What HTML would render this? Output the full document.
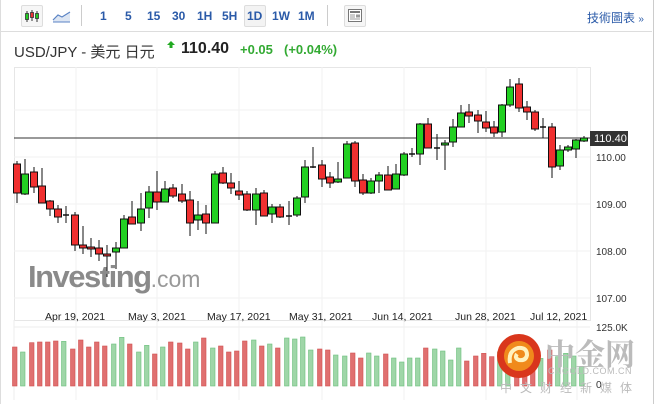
<!DOCTYPE html>
<html><head><meta charset="utf-8"><style>
body{margin:0;width:654px;height:405px;overflow:hidden;background:#fff;font-family:"Liberation Sans","Noto Sans CJK TC",sans-serif;position:relative}
.a{position:absolute}
.tb{font-size:12px;font-weight:bold;color:#2a5aa8;top:9px}
</style></head><body>
<div class="a" style="left:0;top:0;width:652px;height:404px;border-right:1px solid #ccc;border-left:1px solid #ddd"></div>
<div class="a" style="left:0;top:31px;width:652px;height:1px;background:#ddd"></div>
<div class="a" style="left:21px;top:5px;width:20px;height:20px;border:1px solid #ddd;border-radius:2px;background:#f6f6f6"></div>
<svg class="a" style="left:21px;top:5px" width="22" height="22">
<line x1="6" y1="6" x2="6" y2="17" stroke="#333"/><rect x="4.5" y="8.5" width="3" height="6" fill="#2c2" stroke="#333" stroke-width="0.8"/>
<line x1="11" y1="5" x2="11" y2="16" stroke="#333"/><rect x="9.5" y="7.5" width="3" height="5" fill="#e33" stroke="#333" stroke-width="0.8"/>
<line x1="16" y1="6" x2="16" y2="17" stroke="#333"/><rect x="14.5" y="8.5" width="3" height="5" fill="#2c2" stroke="#333" stroke-width="0.8"/></svg>
<svg class="a" style="left:52px;top:9px" width="20" height="14"><path d="M1 11 L6 6 L10 8 L18 3 L18 13 L1 13Z" fill="#dde6f3"/><path d="M1 11 L6 6 L10 8 L18 3" stroke="#5a83c4" fill="none" stroke-width="1.2"/><line x1="1" y1="13" x2="18" y2="13" stroke="#5a83c4"/></svg>
<div class="a" style="left:81px;top:5px;width:1px;height:21px;background:#ccc"></div>
<div class="a tb" style="left:100px">1</div><div class="a tb" style="left:125px">5</div><div class="a tb" style="left:147px">15</div><div class="a tb" style="left:172px">30</div><div class="a tb" style="left:197px">1H</div><div class="a tb" style="left:222px">5H</div>
<div class="a" style="left:244px;top:5px;width:20px;height:20px;border:1px solid #ddd;border-radius:2px;background:#f3f3f3"></div>
<div class="a tb" style="left:247px">1D</div><div class="a tb" style="left:272px">1W</div><div class="a tb" style="left:298px">1M</div>
<div class="a" style="left:327px;top:5px;width:1px;height:21px;background:#ccc"></div>
<div class="a" style="left:344px;top:5px;width:20px;height:20px;border:1px solid #ddd;border-radius:2px;background:#f6f6f6"></div>
<svg class="a" style="left:348px;top:9px" width="14" height="13"><rect x="0.5" y="0.5" width="13" height="12" fill="#fff" stroke="#777"/><rect x="2" y="2" width="10" height="2" fill="#777"/><line x1="2" y1="6" x2="7" y2="6" stroke="#999"/><line x1="2" y1="8" x2="7" y2="8" stroke="#999"/><line x1="2" y1="10" x2="12" y2="10" stroke="#999"/><rect x="8" y="5.5" width="4" height="3" fill="#999"/></svg>
<div class="a" style="left:587px;top:9px;font-size:12px;color:#2a5aa8">技術圖表 <span style="font-size:10px">»</span></div>
<div class="a" style="left:14px;top:41px;font-size:15px;color:#333">USD/JPY - 美元 日元</div>
<svg class="a" style="left:167px;top:41px" width="8" height="8"><path d="M4 0 L8 4 L5.5 4 L5.5 7 L2.5 7 L2.5 4 L0 4Z" fill="#2a2"/></svg>
<div class="a" style="left:181px;top:40px;font-size:16px;font-weight:bold;color:#222">110.40</div>
<div class="a" style="left:240px;top:42px;font-size:13px;font-weight:bold;color:#3a3">+0.05</div>
<div class="a" style="left:284px;top:42px;font-size:13px;font-weight:bold;color:#3a3">(+0.04%)</div>
<svg id="c" class="a" style="left:0;top:0" width="654" height="405"></svg>
<div class="a" style="left:28px;top:259px;font-size:31px;font-weight:bold;color:#8a8a8a;letter-spacing:-1.5px">Investing<span style="font-weight:normal;font-size:23px;color:#999;letter-spacing:0">.com</span></div>
<svg class="a" style="left:496px;top:333px" width="46" height="46"><circle cx="23" cy="23" r="22" fill="#d9361c"/><circle cx="23" cy="23" r="15" fill="#f08a1c"/><path d="M14 30 Q12 18 22 15 Q31 14 31 22 Q30 28 23 27 Q18 25 21 21" stroke="#fff2c0" stroke-width="4" fill="none"/></svg>
<div class="a" style="left:545px;top:330px;font-size:30px;font-weight:bold;color:#bbb;font-family:'Noto Serif CJK SC',serif">中金网</div>
<div class="a" style="left:548px;top:366px;font-size:9px;color:#bbb;letter-spacing:0.5px">CNGOLD.COM.CN</div>
<div class="a" style="left:500px;top:379px;font-size:12px;color:#bbb;letter-spacing:8px">中文财经新媒体</div>
<script>
var C=[[17,164,193,161,203,0],[25,174,194,159,195,1],[34,172,187,167,193,0],[42,186,203,168,203,0],[50,201,209,200,216,0],[58,209,217,205,223,0],[66,215,215,206,223,2],[75,215,245,212,251,0],[83,245,248,226,254,0],[91,247,249,238,257,0],[99,248,254,240,261,0],[107,254,256,245,277,0],[116,248,252,242,269,1],[124,219,248,215,248,1],[132,217,224,201,224,0],[141,209,223,193,231,1],[149,192,208,186,218,1],[157,192,202,171,210,0],[165,189,202,181,202,1],[173,188,196,184,198,0],[182,194,201,184,203,0],[190,200,223,191,236,0],[198,215,220,201,230,1],[206,214,223,205,234,0],[215,174,223,171,223,1],[223,173,183,167,184,0],[231,183,188,173,194,0],[239,191,195,181,200,0],[247,194,210,191,211,0],[256,194,210,188,225,1],[264,193,216,190,216,0],[272,207,214,204,223,1],[280,207,217,204,218,0],[289,216,216,201,225,2],[297,198,215,196,217,1],[305,167,197,160,203,1],[313,167,167,147,168,2],[322,165,179,160,187,0],[330,177,183,172,188,0],[338,179,182,162,183,1],[347,144,178,141,178,1],[355,143,181,141,187,0],[363,180,193,174,195,0],[371,181,193,178,194,1],[379,175,181,172,193,1],[388,175,190,166,190,0],[396,174,189,164,189,1],[404,154,175,152,176,1],[412,154,154,148,157,2],[420,124,154,123,165,1],[428,124,148,118,148,0],[437,148,148,134,160,2],[445,143,145,140,170,1],[453,127,142,119,147,1],[461,113,127,105,127,1],[469,112,116,104,123,0],[478,115,121,110,133,0],[486,122,128,111,132,0],[494,127,133,121,137,0],[502,105,132,104,137,1],[510,87,105,79,107,1],[519,84,108,78,112,0],[527,107,112,101,120,0],[535,112,129,110,131,0],[543,127,127,118,138,2],[552,127,167,123,178,0],[560,150,166,145,170,1],[568,147,150,145,152,1],[576,140,149,139,158,1],[584,138,141,136,142,1]];
var V=[171,186,158,156,156,153,154,177,150,171,156,168,162,142,162,186,166,192,171,156,159,177,156,144,174,168,186,183,153,150,168,162,174,144,147,141,180,177,180,195,198,189,204,189,198,192,204,216,204,204,174,177,183,210,174,213,198,190,200,186,195,185,200,188,205,180,200,190,198,230];
var s='<rect x="14.5" y="67.5" width="576" height="253" fill="none" stroke="#e6e6e6"/>';
[110,157,204,251,298].forEach(function(y){s+='<line x1="14" x2="590" y1="'+y+'" y2="'+y+'" stroke="#f2f2f2"/>'});
[76,157,239,322,404,486,577].forEach(function(x){s+='<line x1="'+x+'" x2="'+x+'" y1="67" y2="400" stroke="#f2f2f2"/>'});
s+='<line x1="14" x2="590" y1="327" y2="327" stroke="#eee"/><line x1="14" x2="14" y1="320" y2="400" stroke="#eee"/>';
s+='<line x1="14" x2="590" y1="138" y2="138" stroke="#333"/>';
C.forEach(function(c,i){var x=c[0],col=c[5]==0?'#f03030':'#22d022';
s+='<line x1="'+x+'" x2="'+x+'" y1="'+c[3]+'" y2="'+c[4]+'" stroke="#111"/>';
if(c[5]==2)s+='<line x1="'+(x-3)+'" x2="'+(x+3)+'" y1="'+c[1]+'" y2="'+c[1]+'" stroke="#111" stroke-width="1.5"/>';
else s+='<rect x="'+(x-3.5)+'" y="'+c[1]+'" width="7" height="'+Math.max(2,c[2]-c[1])+'" fill="'+col+'" stroke="#111"/>';
var top=290+V[i]/3,vc=c[5]==0?'#e07070':'#9fd6a8',vs=c[5]==0?'#d05050':'#6cbf7c';
s+='<rect x="'+(x-4.5)+'" y="'+top+'" width="4.5" height="'+(386-top)+'" fill="'+vc+'" stroke="'+vs+'" stroke-width="0.6"/>';});
s+='<rect x="590" y="131" width="38" height="15" fill="#333"/><text x="594" y="142" font-size="11" fill="#fff" font-family="Liberation Sans">110.40</text>';
[[110,161],[109,208],[108,255],[107,302]].forEach(function(p){s+='<text x="596" y="'+p[1]+'" font-size="10" fill="#333" font-family="Liberation Sans">'+p[0].toFixed(2)+'</text>'});
s+='<text x="596" y="331" font-size="10" fill="#333" font-family="Liberation Sans">125.0K</text><text x="596" y="388" font-size="10" fill="#333" font-family="Liberation Sans">0</text>';
[["Apr 19, 2021",45],["May 3, 2021",128],["May 17, 2021",207],["May 31, 2021",289],["Jun 14, 2021",372],["Jun 28, 2021",455],["Jul 12, 2021",530]].forEach(function(d){s+='<text x="'+d[1]+'" y="320" font-size="10.5" fill="#222" font-family="Liberation Sans">'+d[0]+'</text>'});
document.getElementById('c').innerHTML=s;
</script>
</body></html>
